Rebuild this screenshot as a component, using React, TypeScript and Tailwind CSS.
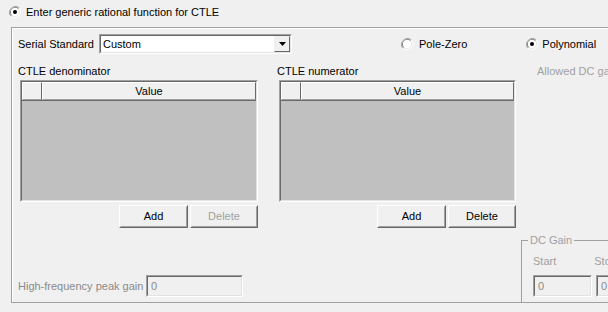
import React from 'react'

function Radio({ checked, disabled }: { checked?: boolean; disabled?: boolean }) {
  return (
    <svg width="12" height="12" viewBox="0 0 12 12" className="shrink-0">
      <path d="M10.2 1.8 A6 6 0 0 0 1.8 10.2" fill="none" stroke="#a0a0a0" strokeWidth="1" />
      <path d="M1.8 10.2 A6 6 0 0 0 10.2 1.8" fill="none" stroke="#ffffff" strokeWidth="1" />
      <path d="M9.5 2.5 A5 5 0 0 0 2.5 9.5" fill="none" stroke="#696969" strokeWidth="1" />
      <path d="M2.5 9.5 A5 5 0 0 0 9.5 2.5" fill="none" stroke="#e3e3e3" strokeWidth="1" />
      <circle cx="6" cy="6" r="4.2" fill={disabled ? '#f0f0f0' : '#ffffff'} />
      {checked && <circle cx="6" cy="6" r="2" fill="#000000" />}
    </svg>
  )
}

function Button({ label, disabled }: { label: string; disabled?: boolean }) {
  return (
    <div className="h-[23px] border border-t-white border-l-white border-r-[#696969] border-b-[#696969]">
      <div className={`h-full flex items-center justify-center border border-t-[#f0f0f0] border-l-[#f0f0f0] border-r-[#a0a0a0] border-b-[#a0a0a0] ${disabled ? 'text-[#a0a0a0]' : 'text-black'}`}>
        {label}
      </div>
    </div>
  )
}

function Grid({ label, deleteDisabled }: { label: string; deleteDisabled?: boolean }) {
  return (
    <div className="flex flex-col">
      <div className="h-[14px] leading-[14px] -ml-[2px]">{label}</div>
      <div className="mt-[2px] h-[122px] border border-t-[#a0a0a0] border-l-[#a0a0a0] border-r-white border-b-white">
        <div className="h-full flex flex-col border border-t-[#696969] border-l-[#696969] border-r-[#e3e3e3] border-b-[#e3e3e3] bg-[#c0c0c0]">
          <div className="flex h-[19px] bg-[#f0f0f0] border-b border-[#696969]">
            <div className="w-[20px] border border-t-white border-l-white border-r-[#696969] border-b-[#a0a0a0]" />
            <div className="flex-1 flex items-center justify-center border border-t-white border-l-white border-r-[#696969] border-b-[#a0a0a0]">
              Value
            </div>
          </div>
        </div>
      </div>
      <div className="mt-[3px] flex justify-end gap-[2px]">
        <div className="w-[69px]"><Button label="Add" /></div>
        <div className="w-[68px]"><Button label="Delete" disabled={deleteDisabled} /></div>
      </div>
    </div>
  )
}

function Field({ width }: { width: string }) {
  return (
    <div className={`${width} h-[22px] border border-t-[#a0a0a0] border-l-[#a0a0a0] border-r-white border-b-white`}>
      <div className="h-full flex items-center pl-[3px] border border-t-[#696969] border-l-[#696969] border-r-[#e3e3e3] border-b-[#e3e3e3] text-[#8a8a8a]">
        0
      </div>
    </div>
  )
}

export default function App() {
  return (
    <div className="w-[608px] h-[312px] bg-[#f0f0f0] overflow-hidden text-[11px] text-black font-['Liberation_Sans',Arial,sans-serif]">
      <div className="flex items-center gap-[5px] pl-[9px] pt-[6px]">
        <Radio checked />
        <span className="leading-[12px]">Enter generic rational function for CTLE</span>
      </div>

      <div className="ml-[11px] mt-[9px] w-[620px] h-[276px] border-l border-t border-b border-[#a0a0a0] shadow-[inset_1px_1px_0_#ffffff] flex flex-col pl-[6px]">
        <div className="mt-[6px] h-[20px] flex items-center">
          <span className="w-[81px]">Serial Standard</span>
          <div className="w-[193px] h-[20px] border border-t-[#a0a0a0] border-l-[#a0a0a0] border-r-white border-b-white">
            <div className="h-full flex items-center bg-white border border-t-[#696969] border-l-[#696969] border-r-[#e3e3e3] border-b-[#e3e3e3]">
              <span className="flex-1 pl-[2px]">Custom</span>
              <div className="w-[16px] h-full border border-t-[#f0f0f0] border-l-[#f0f0f0] border-r-[#696969] border-b-[#696969] bg-[#f0f0f0] flex items-center justify-center">
                <svg width="7" height="4" viewBox="0 0 7 4"><path d="M0 0 H7 L3.5 4 Z" fill="#000" /></svg>
              </div>
            </div>
          </div>
          <div className="ml-[109px] flex items-center gap-[6px]">
            <Radio />
            <span>Pole-Zero</span>
          </div>
          <div className="ml-[59px] flex items-center gap-[4px]">
            <Radio checked />
            <span>Polynomial</span>
          </div>
        </div>

        <div className="mt-[10px] flex">
          <div className="ml-[2px] w-[238px]"><Grid label="CTLE denominator" deleteDisabled /></div>
          <div className="ml-[21px] w-[237px]"><Grid label="CTLE numerator" /></div>
          <div className="ml-[21px] h-[14px] leading-[14px] text-[#a0a0a0] whitespace-nowrap">Allowed DC gain</div>
        </div>

        <div className="flex-1 flex items-end">
          <div className="flex items-center mb-[5px] h-[22px]">
            <span className="w-[128px] text-[#8a8a8a]">High-frequency peak gain</span>
            <Field width="w-[97px]" />
          </div>
          <div className="ml-[278px] w-[200px] h-[62px] border-l border-t border-[#a0a0a0] relative pl-[11px] pt-[13px] flex flex-col">
            <span className="absolute -top-[8px] left-[6px] px-[2px] leading-[14px] bg-[#f0f0f0] text-[#a0a0a0]">DC Gain</span>
            <div className="flex gap-[38px] h-[14px] leading-[14px] text-[#a0a0a0]"><span>Start</span><span>Stop</span></div>
            <div className="mt-[7px] flex gap-[4px]">
              <Field width="w-[59px]" />
              <Field width="w-[59px]" />
            </div>
          </div>
        </div>
      </div>
    </div>
  )
}
